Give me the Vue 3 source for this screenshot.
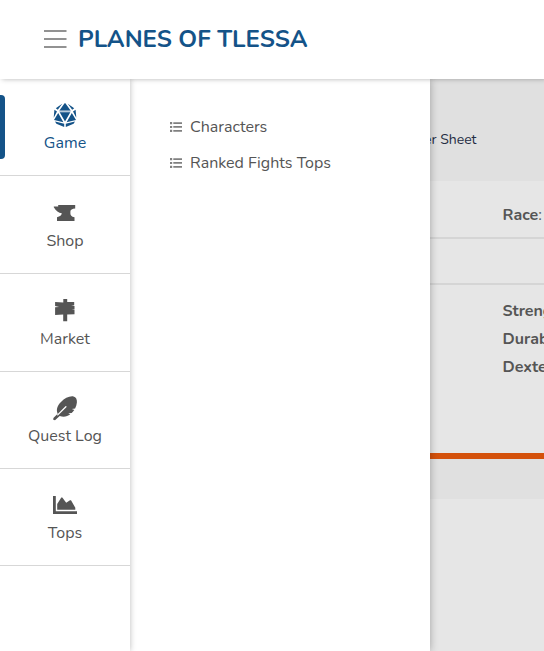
<script setup>
const sections = [
  { label: 'Game', icon: 'die', active: true },
  { label: 'Shop', icon: 'anvil' },
  { label: 'Market', icon: 'signs' },
  { label: 'Quest Log', icon: 'feather' },
  { label: 'Tops', icon: 'chart' },
]
const links = ['Characters', 'Ranked Fights Tops']
const stats = ['Strength:', 'Durability:', 'Dexterity:']
</script>

<template>
  <div class="screen">
    <header class="top-bar">
      <svg class="burger" viewBox="0 0 23 18"><path d="M0 1h22.5M0 9h22.5M0 17h22.5" /></svg>
      <span class="brand">PLANES OF TLESSA</span>
    </header>
    <div class="body">
      <nav class="menu-bar">
        <a v-for="s in sections" :key="s.label" :class="['item', s.icon, { active: s.active }]">
          <svg v-if="s.icon === 'die'" class="glyph" viewBox="0 0 24 24">
            <path d="M11.600.2h.8l5.200 7.200H6.400zM9.200.8 4.800 6.800 2.800 5.300zM14.800.8l4.400 6 2-1.500zM6.700 9.200h10.600L12 18.500zM1.400 6.800 4 8.600.7 14.800zM22.600 6.800 20 8.600l3.300 6.200zM5.200 10l5.200 9.200L1 17zM18.800 10l-5.200 9.200L23 17zM2 18.600l9.200 2.200v3.100L3.400 20.700zM22 18.600l-9.200 2.200v3.100l7.800-3.200z" />
            <path d="M6.400 7.400h11.200v1.800H6.400z" opacity=".3" />
          </svg>
          <svg v-else-if="s.icon === 'anvil'" class="glyph" viewBox="0 0 24 24">
            <path d="M5.200 4h17v3.400c-3 .2-4.800 1.200-4.800 3v2c0 1.900 1 3 4.100 3.900V20H4v-3.700c3-.8 4.700-2.300 4.800-4.100C5.600 12 3 10.200.8 6.300V5.400h4.400z" />
          </svg>
          <svg v-else-if="s.icon === 'signs'" class="glyph" viewBox="0 0 24 24">
            <path d="M10.300 0h3.900v3.100l7-.2v3.400l-3 .5 3.300.1v3.500l-3 .5 3 .1v4.300l-7.300.3v6.700h-4v-6.700l-8.100.3V8.300l4-.2-4-1V3.100l8.200.5z" />
          </svg>
          <svg v-else-if="s.icon === 'feather'" class="glyph" viewBox="0 0 24 24">
            <path d="M20.500.4C23 .8 24.200 3.400 23.900 6.500c-.2 2-.8 4.200-1.800 6.100l-3.300.4 2.500 1c-.8 1.200-1.600 2.100-2.600 3l-3.500.2 2.100 1.100c-3.100 2.300-6.300 2.900-10.600 1.800L2 24.300.2 23.800l.2-1.800 4.300-4.300C2.900 13.600 4.300 9.500 8 5.900 11.700 2.100 16.300-.2 20.500.4z" />
            <path class="shaft" d="M4.700 18.900 12.900 10.800" />
          </svg>
          <svg v-else class="glyph" viewBox="0 0 24 24">
            <path d="M0 3h2.800v15.200H24V21H0zM4.200 16.700V11L8.300 4.500h1L13.200 9.800 17 7.300h1l4.300 7.500v1.900z" />
          </svg>
          <span class="label">{{ s.label }}</span>
        </a>
      </nav>
      <aside class="submenu">
        <a v-for="link in links" :key="link" class="link">
          <svg viewBox="0 0 12 10"><path d="M0 0h2.200v2.200H0zM3.300.2H12v1.700H3.300zM0 3.900h2.200v2.200H0zM3.300 4.100H12v1.700H3.300zM0 7.800h2.200V10H0zM3.300 8H12v1.700H3.300z" /></svg>
          <span>{{ link }}</span>
        </a>
      </aside>
      <main class="content">
        <div class="breadcrumb"><span>Character Sheet</span></div>
        <section class="card">
          <div class="row race"><span><b>Race</b>: Human</span></div>
          <div class="row spacer"></div>
          <div class="stats"><b v-for="s in stats" :key="s">{{ s }}</b></div>
        </section>
        <div class="footer-strip"></div>
      </main>
    </div>
  </div>
</template>

<style>
body { margin: 0; overflow: hidden; }
</style>

<style scoped>
.screen {
  width: 544px;
  height: 651px;
  display: flex;
  flex-direction: column;
  overflow: hidden;
  background: #fff;
  color: #555;
  font-family: Nunito, Lato, "Noto Sans", sans-serif;
  font-size: 16px;
  line-height: 24px;
}
.top-bar {
  z-index: 4;
  flex: none;
  box-sizing: border-box;
  height: 79px;
  display: flex;
  align-items: center;
  padding: 0 0 1px 44px;
  background: #fff;
  box-shadow: 2px 0 5px rgba(0, 0, 0, .3);
}
.burger { width: 23px; height: 18px; margin-right: 11px; flex: none; }
.burger path { fill: none; stroke: #929292; stroke-width: 2; }
.brand {
  color: #145388;
  font-size: 24px;
  font-weight: 700;
  white-space: nowrap;
}
.body { flex: 1; display: flex; min-height: 0; }
.menu-bar {
  z-index: 3;
  flex: none;
  width: 130px;
  background: #fff;
  box-shadow: 0 0 6px rgba(0, 0, 0, .27);
}
.item {
  position: relative;
  box-sizing: border-box;
  height: 98px;
  display: flex;
  flex-direction: column;
  align-items: center;
  padding-top: 25px;
  border-bottom: 1px solid #d7d7d7;
}
.item.die, .item.feather, .item.chart { height: 97px; padding-top: 24px; }
.item.active { color: #145388; }
.item.active::before {
  content: "";
  position: absolute;
  left: 0;
  top: 16px;
  width: 5px;
  height: 64px;
  background: #145388;
  border-radius: 0 4px 4px 0;
}
.glyph { width: 24px; height: 24px; fill: currentColor; overflow: visible; flex: none; }
.shaft { fill: none; stroke: #fff; stroke-width: 1.3; stroke-linecap: round; }
.label { margin-top: 4px; white-space: nowrap; }
.submenu {
  z-index: 2;
  flex: none;
  box-sizing: border-box;
  width: 300px;
  padding: 36px 40px;
  background: #fff;
  box-shadow: 0 0 8px rgba(0, 0, 0, .3);
}
.link { display: flex; align-items: center; height: 24px; margin-bottom: 12px; white-space: nowrap; }
.link svg { width: 12px; height: 10px; margin-right: 8px; fill: #808080; }
.content { flex: 1; min-width: 0; overflow: hidden; background: #e6e6e6; white-space: nowrap; }
.breadcrumb {
  box-sizing: border-box;
  height: 102px;
  display: flex;
  justify-content: flex-end;
  padding: 49px 67.500px 0 0;
  background: #e0e0e0;
  color: #252d43;
  font-size: 14px;
}
.card { height: 272px; border-bottom: 6px solid #d4510b; }
.row { box-sizing: border-box; border-bottom: 2px solid #d5d5d5; }
.race { height: 58px; padding: 22px 0 0 72.500px; }
.spacer { height: 46px; }
.stats { display: flex; flex-direction: column; padding: 12px 0 0 72.500px; line-height: 28px; }
.footer-strip { height: 40px; background: #e0e0e0; }
</style>
